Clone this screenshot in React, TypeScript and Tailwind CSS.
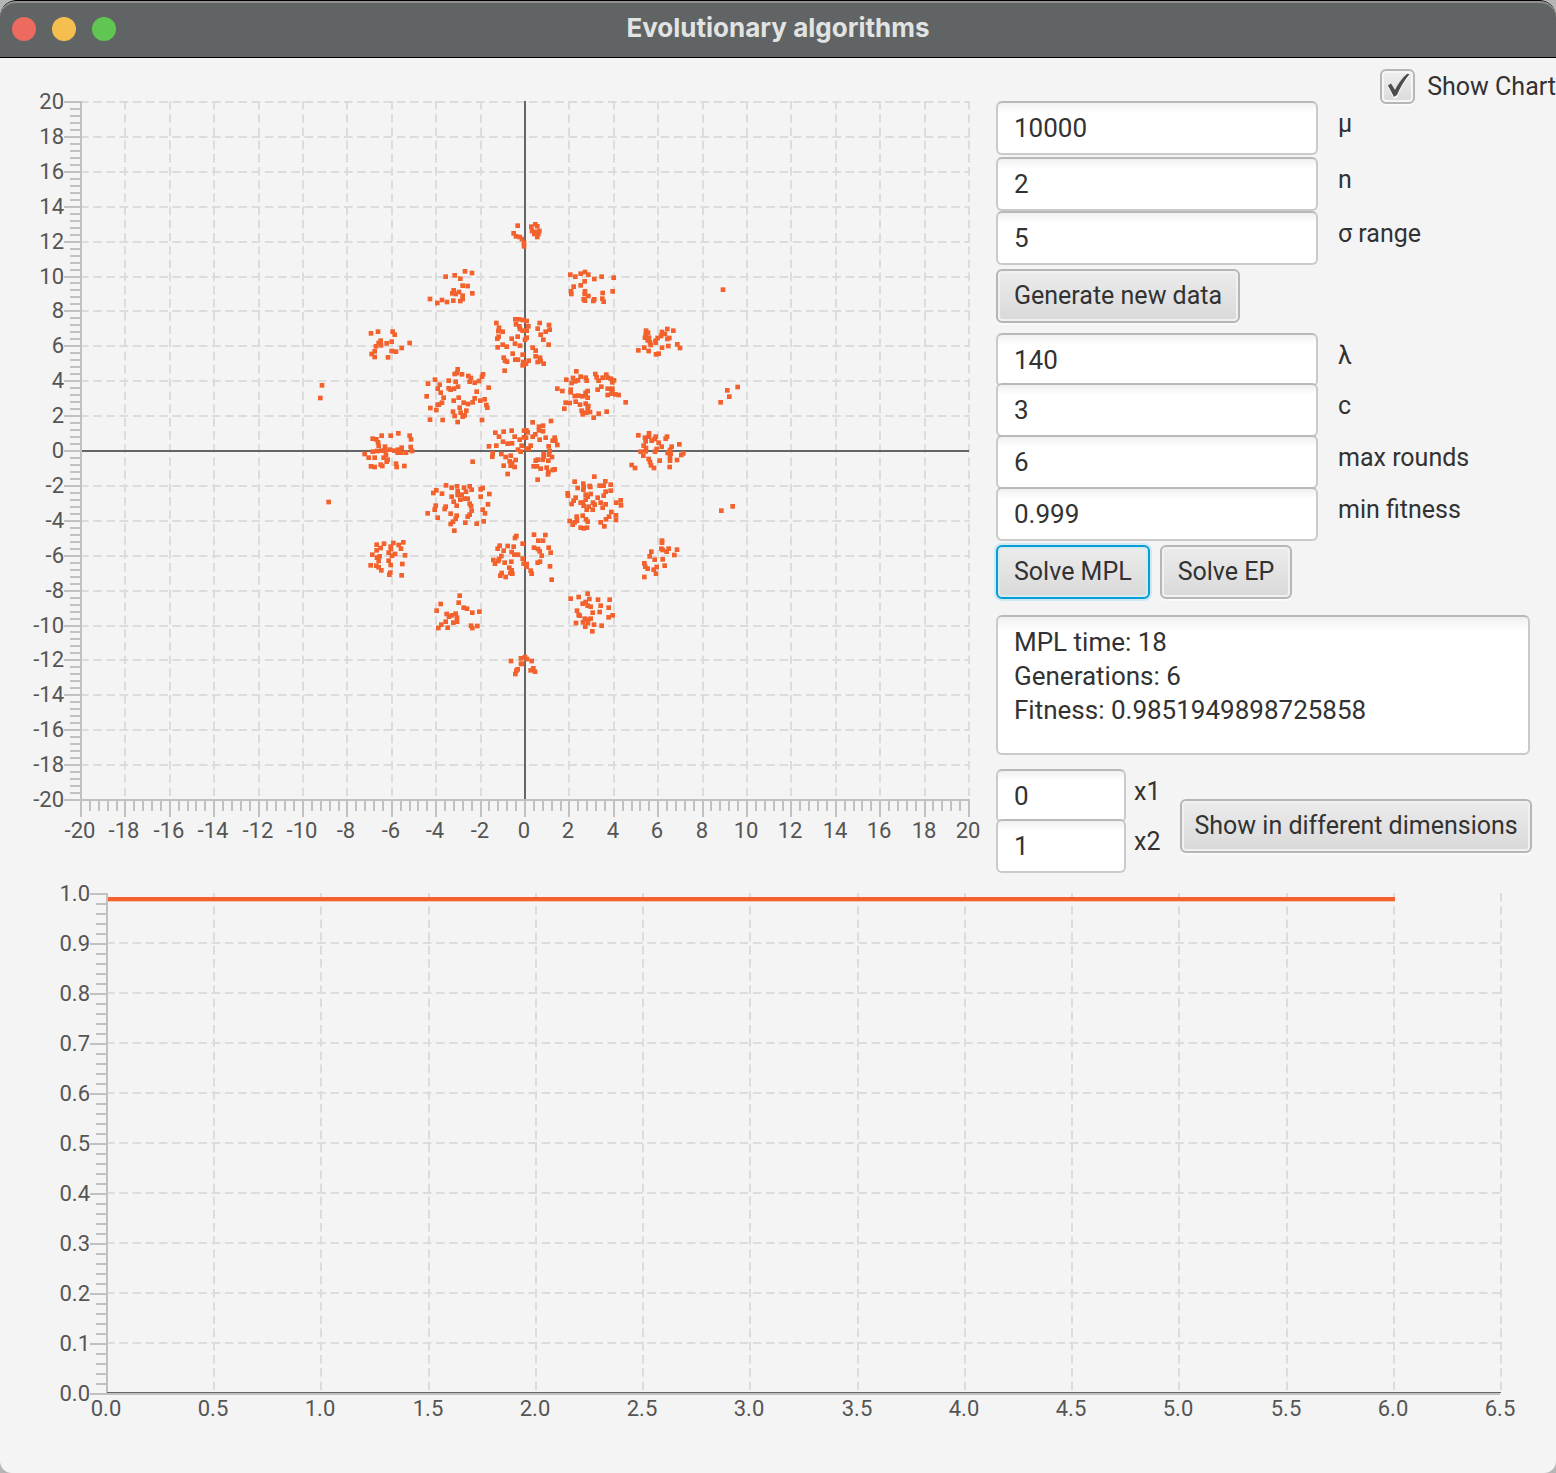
import { useState } from "react";
import type { ReactNode } from "react";

type Cluster = { x: number; y: number; points: string };

const clusters: Cluster[] = [
  {
    x: 350,
    y: 210,
    points:
      "502,46 490,69 497,78 508,80 515,86 521,97 521,108 344,183 365,188 313,195 286,199 330,205 337,226 352,227 310,240 326,245 306,249 316,251 366,249 337,256 337,266 239,266 275,269 261,278 290,275 309,271 330,272 62,369 83,364 127,364 133,373 91,391 85,398 92,405 109,399 124,394 178,398 77,408 154,413 73,423 64,431 124,422 137,424 73,440 113,441 438,338 446,352 444,362 457,364 495,327 506,327 517,329 497,342 507,348 509,356 517,361 445,379 441,385 484,385 502,379 524,388 494,400 509,406 457,403 469,409 442,411 487,430 517,433 460,442 464,451 470,454 495,448 503,448 519,455 517,465 463,481",
  },
  {
    x: 525,
    y: 210,
    points:
      "18,49 30,42 36,48 20,62 29,65 42,62 27,71 39,71 36,80 135,193 150,199 166,190 179,185 189,193 229,199 207,206 265,202 178,213 166,225 145,229 137,243 138,251 179,243 178,251 189,257 262,243 232,248 175,267 179,271 207,267 204,272 231,265 235,274 593,238 4,332 43,338 71,344 9,348 37,355 73,358 61,364 4,361 46,373 4,382 54,388 70,403 22,412 31,421 31,438 44,442 10,451 37,455 46,452 55,460 2,460 362,361 368,367 361,374 359,382 371,382 367,390 374,396 376,404 426,356 444,361 410,365 419,371 407,377 397,383 391,391 391,397 432,383 426,386 456,402 464,413 429,407 410,412 357,412 339,420 370,422 392,432 400,430",
  },
  {
    x: 310,
    y: 360,
    points:
      "35,75 30,113 442,27 433,41 440,38 455,42 474,47 482,53 518,42 515,49 374,58 353,70 388,73 415,61 436,64 478,64 493,67 506,62 443,79 535,82 382,85 415,84 421,88 431,85 391,97 499,94 349,108 400,112 445,112 430,121 493,114 510,121 523,117 395,127 382,133 386,133 460,127 473,131 487,126 528,134 531,142 360,143 378,149 448,142 428,154 451,157 468,151 433,167 457,169 463,165 359,178 397,179 442,185 515,179 264,219 241,226 214,226 187,235 198,237 203,246 205,256 298,226 302,237 224,259 274,262 301,260 305,272 187,274 201,272 213,271 224,271 238,268 252,271 263,268 262,277 273,277 287,277 163,281 227,284 175,292 193,292 220,292 232,298 229,304 182,318 193,320 211,313 216,317 257,310 259,320 282,317 487,304 555,217 580,214 604,211 641,211 566,229 613,229 641,231 628,238 578,244 592,250 605,249 536,258 558,256 634,256 623,268 631,274 547,279 546,289 573,281 586,290 601,286 616,299 598,303 605,308 580,316 601,316 613,320 592,341",
  },
  {
    x: 525,
    y: 360,
    points:
      "153,33 123,58 143,53 139,68 150,63 158,60 166,49 181,52 184,61 210,41 214,51 220,61 243,43 232,52 247,52 257,55 266,60 261,66 96,85 111,92 136,88 136,96 187,92 181,97 181,105 187,112 217,88 228,79 247,85 261,85 261,94 247,104 258,100 270,102 280,104 301,126 148,107 159,106 171,108 121,127 133,128 151,124 164,133 181,130 189,137 187,144 117,145 169,151 172,162 183,157 194,155 205,172 220,160 244,154 637,80 606,90 612,109 586,126 22,186 77,182 41,199 53,196 3,210 7,216 41,210 53,213 22,229 30,222 43,238 61,232 88,232 82,241 90,241 96,254 2,232 16,256 4,265 10,265 70,258 73,272 55,281 71,283 80,290 55,289 37,298 52,298 31,301 69,301 25,318 35,318 46,325 64,322 82,329 88,327 69,335 68,342 37,358 371,219 339,225 359,232 371,229 391,229 425,229 421,235 379,241 388,236 361,243 400,247 355,256 362,263 409,259 394,266 439,259 462,252 346,274 361,273 389,274 434,269 427,278 436,280 354,286 474,279 468,284 370,296 374,305 377,315 403,301 434,290 434,301 455,299 386,323 433,320 319,314 329,323",
  },
  {
    x: 310,
    y: 470,
    points:
      "55,95 407,45 424,52 440,48 461,52 478,48 484,58 517,53 511,57 378,60 369,68 395,70 442,63 467,64 442,74 454,73 424,79 511,79 537,71 463,85 472,85 450,88 430,94 376,106 439,106 406,109 403,116 478,100 482,107 533,102 373,118 484,121 517,118 524,129 352,129 421,130 439,136 478,133 472,139 382,142 436,145 428,154 421,161 465,157 499,160 520,153 432,181 199,223 221,220 249,218 279,216 265,224 241,229 211,233 242,236 272,235 199,240 235,247 254,251 245,256 186,253 208,258 200,262 284,255 205,272 235,271 181,285 198,286 241,284 276,281 205,291 213,300 240,307 237,313 274,315 618,197 614,203 568,226 562,235 592,227 610,229 637,220 580,241 604,245 612,253 623,253 573,257 637,265 566,266 549,269 564,272 554,280 583,277 603,274 640,280 597,292 604,300 574,308 606,310 600,308 570,316 586,320",
  },
  {
    x: 525,
    y: 470,
    points:
      "207,19 148,34 174,40 240,33 193,47 256,43 157,53 175,50 223,46 235,46 195,50 174,58 256,61 241,64 127,69 128,76 181,73 196,71 235,76 151,82 187,79 181,88 217,82 145,91 139,101 166,97 172,97 203,97 226,97 241,102 175,106 190,109 208,103 184,118 202,118 232,112 273,97 286,90 287,105 258,125 172,136 154,139 155,151 272,135 272,149 251,139 242,147 182,147 187,154 133,152 148,156 142,163 226,156 237,168 166,172 175,174 185,172 622,108 588,121 26,193 60,194 39,211 53,211 26,232 38,236 70,232 43,243 76,247 49,256 44,274 37,277 74,288 4,281 4,289 16,301 19,310 79,328 410,211 410,217 408,235 412,239 430,235 455,238 424,244 378,244 447,254 373,258 388,268 412,267 357,279 360,289 367,295 418,286 394,290 385,298 392,310 357,320",
  },
  {
    x: 420,
    y: 585,
    points:
      "118,31 115,52 61,56 49,76 130,67 140,70 156,82 177,79 79,86 86,94 95,90 106,85 110,97 110,109 99,112 76,109 63,118 54,128 82,127 152,121 156,128 171,122 314,215 302,219 320,221 272,227 334,227 302,235 305,236 292,252 288,256 285,266 339,249 331,255 344,259 502,25 475,35 451,40 507,41 533,43 568,43 487,55 496,50 502,61 511,64 541,61 565,67 470,76 517,82 538,80 475,89 478,91 577,90 565,96 493,100 502,103 511,100 488,111 503,113 467,113 521,118 495,124 544,121 516,138",
  },
];

const range = (n: number) => Array.from({ length: n }, (_, i) => i);

const grid = {
  stroke: "#dcdcdc",
  strokeWidth: 2,
  strokeDasharray: "6.6 6.6",
  strokeLinecap: "square" as const,
};
const axis = { stroke: "#c1c1c1", strokeWidth: 2 };

function ScatterChart() {
  const px = (i: number) => Math.round(81 + 44.4 * i);
  const py = (i: number) => Math.round(102 + 34.9 * i);
  return (
    <svg viewBox="0 58 996 815" className="block h-auto w-full" role="img" aria-label="Population scatter chart">
      <g {...grid}>
        {range(20).map((i) => (
          <line key={`h${i}`} x1={81} x2={969} y1={py(i)} y2={py(i)} />
        ))}
        {range(20).map((i) => (
          <line key={`v${i}`} x1={px(i + 1)} x2={px(i + 1)} y1={102} y2={799} />
        ))}
      </g>
      <g {...axis}>
        <path d="M81 101V801M80 800H970" />
        {range(101).map((i) => (
          <line
            key={`y${i}`}
            x1={i % 5 ? 70 : 64}
            x2={81}
            y1={Math.round(102 + 6.98 * i)}
            y2={Math.round(102 + 6.98 * i)}
          />
        ))}
        {range(101).map((i) => (
          <line
            key={`x${i}`}
            x1={Math.round(81 + 8.88 * i)}
            x2={Math.round(81 + 8.88 * i)}
            y1={800}
            y2={i % 5 ? 811 : 817}
          />
        ))}
      </g>
      <path d="M525 101V799M82 451H969" stroke="#646565" strokeWidth={2} />
      <g fill="#f3622d">
        {clusters.map((c, k) => (
          <g key={k} transform={`translate(${c.x} ${c.y}) scale(${1 / 3})`}>
            {c.points.split(" ").map((p, i) => {
              const [x, y] = p.split(",").map(Number);
              return <rect key={i} x={x - 6} y={y - 6} width={14} height={14} />;
            })}
          </g>
        ))}
      </g>
      <g className="fill-[#555555] text-[22px]">
        {range(21).map((i) => (
          <text key={`ly${i}`} x={64} y={py(i) + 7} textAnchor="end">
            {20 - 2 * i}
          </text>
        ))}
        {range(21).map((i) => (
          <text key={`lx${i}`} x={px(i) - 1} y={838} textAnchor="middle">
            {2 * i - 20}
          </text>
        ))}
      </g>
    </svg>
  );
}

function FitnessChart() {
  const px = (i: number) => Math.round(107 + 107.23 * i);
  return (
    <svg viewBox="0 873 1556 600" className="block h-auto w-full" role="img" aria-label="Fitness by generation">
      <g {...grid}>
        {range(9).map((i) => (
          <line key={`h${i}`} x1={107} x2={1501} y1={943 + 50 * i} y2={943 + 50 * i} />
        ))}
        {range(13).map((i) => (
          <line key={`v${i}`} x1={px(i + 1)} x2={px(i + 1)} y1={894} y2={1392} />
        ))}
      </g>
      <g {...axis}>
        <path d="M107 893V1395M106 1394H1500" />
        {range(51).map((i) => (
          <line key={i} x1={i % 5 ? 96 : 90} x2={107} y1={894 + 10 * i} y2={894 + 10 * i} />
        ))}
      </g>
      <rect x={107} y={1392} width={1394} height={1} fill="#646565" />
      <rect x={108} y={897} width={1287} height={4} fill="#f3622d" />
      <rect x={108} y={901} width={1287} height={1} fill="#f9c4b0" />
      <g className="fill-[#555555] text-[22px]">
        {range(11).map((i) => (
          <text key={`ly${i}`} x={90} y={901 + 50 * i} textAnchor="end">
            {(1 - i / 10).toFixed(1)}
          </text>
        ))}
        {range(14).map((i) => (
          <text key={`lx${i}`} x={px(i) - 1} y={1416} textAnchor="middle">
            {(i / 2).toFixed(1)}
          </text>
        ))}
      </g>
    </svg>
  );
}

const inputClass =
  "h-[54px] rounded-md border-2 border-[#cacaca] border-t-[#b9b9b9] bg-white bg-linear-to-b from-[#f0f0f0] to-white to-20% px-4 text-[26px] text-[#323232] outline-none";

function Field({ id, label, value, small, className }: { id: string; label: string; value: string; small?: boolean; className?: string }) {
  return (
    <div className={`flex ${small ? "gap-2" : "gap-5"} ${className ?? ""}`}>
      <input id={id} defaultValue={value} className={`${inputClass} ${small ? "w-[130px]" : "w-[322px]"}`} />
      <label htmlFor={id} className="pt-[7px] text-[25px] leading-8">
        {label}
      </label>
    </div>
  );
}

function Button({ children, focused, tight }: { children: ReactNode; focused?: boolean; tight?: boolean }) {
  return (
    <button
      type="button"
      className={`h-[54px] rounded-md border-2 bg-linear-to-b from-[#ececec] to-[#d9d9d9] text-[25px] whitespace-nowrap ${tight ? "px-3" : "px-4"} ${
        focused
          ? "border-[#039ed3] shadow-[0_0_0_2px_#cfe8f1,inset_0_0_0_2px_#d5e9f0]"
          : "border-[#b6b6b6] shadow-[0_2px_0_#fafafa,inset_0_0_0_2px_#f1f1f1]"
      }`}
    >
      {children}
    </button>
  );
}

export default function App() {
  const [showChart, setShowChart] = useState(true);
  return (
    <div className="min-h-screen bg-[#b5b5b5] font-['Roboto',sans-serif] text-[26px] text-[#323232]">
      <div className="min-h-screen overflow-hidden rounded-t-2xl rounded-b-xl bg-[#f4f4f4]">
        <header className="grid h-[58px] grid-cols-[1fr_auto_1fr] items-center rounded-t-2xl border-y border-black bg-[#606464] shadow-[inset_0_2px_0_#8f8f90]">
          <div className="flex gap-4 pl-3">
            <button type="button" aria-label="Close" className="size-6 rounded-full bg-[#ed6a5e]" />
            <button type="button" aria-label="Minimize" className="size-6 rounded-full bg-[#f5bf4f]" />
            <button type="button" aria-label="Zoom" className="size-6 rounded-full bg-[#61c554]" />
          </div>
          <h1 className="pb-0.5 font-['Inter',sans-serif] text-[26px] leading-8 font-bold text-[#e2e3e3]">Evolutionary algorithms</h1>
        </header>
        <main>
          <div className="flex items-start">
            <div className="min-w-0 flex-1">
              <ScatterChart />
            </div>
            <form className="w-[560px] shrink-0" onSubmit={(e) => e.preventDefault()}>
              <div className="flex h-[43px] items-start justify-end pt-[11px]">
                <label className="flex items-center gap-3 text-[25px] leading-8 whitespace-nowrap">
                  <span className="relative size-[35px]">
                    <input
                      type="checkbox"
                      checked={showChart}
                      onChange={(e) => setShowChart(e.target.checked)}
                      className="block size-[35px] appearance-none rounded-md border-2 border-[#b6b6b6] bg-linear-to-b from-[#efefef] to-[#dadada] shadow-[0_2px_0_#fafafa,inset_0_0_0_2px_#f6f6f6]"
                    />
                    {showChart && (
                      <svg viewBox="0 0 35 35" className="pointer-events-none absolute inset-0">
                        <path d="M8 17L11 14.500L15 21C18 15 22 9 27 5L29 5.500C24 12 20 19 17 27L14 28Z" fill="#fff" transform="translate(0 1.500)" />
                        <path d="M8 16.500L11 14.500L15 21C18 15 22 9 27 5L29.500 5C24 12 20 19 17 26L14 28Z" fill="#4d4d4d" />
                      </svg>
                    )}
                  </span>
                  Show Chart
                </label>
              </div>
              <Field id="mu" label="μ" value="10000" />
              <Field id="n" label="n" value="2" className="mt-0.5" />
              <Field id="sigma" label="σ range" value="5" />
              <div className="mt-1 flex">
                <Button>Generate new data</Button>
              </div>
              <Field id="lambda" label="λ" value="140" className="mt-2.5" />
              <Field id="c" label="c" value="3" className="relative -mt-1" />
              <Field id="rounds" label="max rounds" value="6" className="relative -mt-0.5" />
              <Field id="fitness" label="min fitness" value="0.999" className="relative -mt-0.5" />
              <div className="mt-1 flex gap-2.5">
                <Button focused>Solve MPL</Button>
                <Button>Solve EP</Button>
              </div>
              <textarea
                aria-label="Result"
                readOnly
                value={"MPL time: 18\nGenerations: 6\nFitness: 0.9851949898725858"}
                className="mt-4 block h-[140px] w-[534px] resize-none overflow-hidden rounded-md border-2 border-[#cacaca] border-t-[#b9b9b9] bg-white bg-linear-to-b from-[#f0f0f0] to-white to-10% px-4 py-2 leading-[34px] outline-none"
              />
              <div className="mt-3.5 flex items-center gap-5">
                <div>
                  <Field id="x1" label="x1" value="0" small />
                  <Field id="x2" label="x2" value="1" small className="relative -mt-1" />
                </div>
                <div className="pt-2.5">
                  <Button tight>Show in different dimensions</Button>
                </div>
              </div>
            </form>
          </div>
          <FitnessChart />
        </main>
      </div>
    </div>
  );
}
